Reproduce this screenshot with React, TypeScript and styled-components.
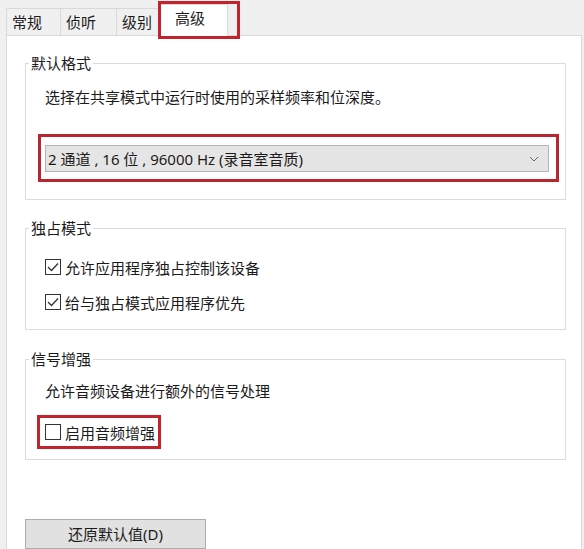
import React from "react";
import styled, { createGlobalStyle } from "styled-components";

const Global = createGlobalStyle`
  html, body { margin: 0; padding: 0; background: #f0f0f0; }
  body {
    font-family: "Noto Sans", "Noto Sans CJK SC", "Liberation Sans", sans-serif;
    color: #1b1b1b;
    font-size: 15px;
  }
`;

const Window = styled.div`
  width: 584px;
  height: 549px;
  overflow: hidden;
  background: #f0f0f0;
  display: flex;
  flex-direction: column;
`;

const TabStrip = styled.div`
  display: flex;
  align-items: flex-end;
  height: 36px;
  padding-left: 6px;
  box-sizing: border-box;
  position: relative;
  z-index: 1;
`;

const Tab = styled.div<{ $w: number; $pl: number; $active?: boolean }>`
  box-sizing: border-box;
  width: ${(p) => p.$w}px;
  height: ${(p) => (p.$active ? 32 : 28)}px;
  padding-left: ${(p) => p.$pl}px;
  display: flex;
  align-items: center;
  font-size: 15px;
  line-height: 20px;
  background: ${(p) => (p.$active ? "#ffffff" : "#f0f0f0")};
  border: 1px solid #d9d9d9;
  border-bottom: ${(p) => (p.$active ? "1px solid #ffffff" : "1px solid #d9d9d9")};
  margin-left: ${(p) => (p.$active ? -2 : -1)}px;
  margin-right: ${(p) => (p.$active ? -2 : 0)}px;
  position: relative;
  z-index: ${(p) => (p.$active ? 2 : 1)};
  padding-bottom: ${(p) => (p.$active ? 4 : 0)}px;
  &:first-child { margin-left: 0; }
`;

const Highlight = styled.div`
  position: absolute;
  border: 3px solid #c3232c;
  pointer-events: none;
`;

const TabHighlight = styled(Highlight)`
  left: -3px;
  top: -4px;
  width: 76px;
  height: 32px;
`;

const Panel = styled.div`
  flex: 1;
  margin: -1px 2px 0 6px;
  background: #ffffff;
  border: 1px solid #d9d9d9;
  border-bottom: none;
  padding: 17px 15px 0 18px;
  display: flex;
  flex-direction: column;
`;

const Group = styled.fieldset<{ $mt?: number }>`
  margin: ${(p) => p.$mt ?? 0}px 0 0 0;
  padding: 0 16px 0 19px;
  border: 1px solid #dcdcdc;
  min-width: 0;
  display: flex;
  flex-direction: column;
`;

const Legend = styled.legend`
  padding: 0 2px;
  margin-left: -16px;
  font-size: 15px;
  line-height: 20px;
`;

const Desc = styled.div<{ $mt: number }>`
  margin-top: ${(p) => p.$mt}px;
  line-height: 22px;
  font-size: 15px;
`;

const ComboFrame = styled.div`
  margin: 26px -10px 17px -7px;
  border: 3px solid #b8262f;
  padding: 8px 7px 7px 4px;
`;

const Combo = styled.div`
  height: 27px;
  box-sizing: border-box;
  background: #e5e5e5;
  border: 1px solid #b4b4b4;
  display: flex;
  align-items: center;
  justify-content: space-between;
  padding: 0 9px 0 2px;
  font-size: 15px;
  line-height: 20px;
`;

const CheckRow = styled.label<{ $mt: number }>`
  margin-top: ${(p) => p.$mt}px;
  height: 22px;
  display: flex;
  align-items: center;
  gap: 4px;
  font-size: 15px;
`;

const Box = styled.span`
  width: 16px;
  height: 16px;
  box-sizing: border-box;
  border: 1px solid #333333;
  background: #fff;
  display: inline-flex;
  align-items: center;
  justify-content: center;
  flex-shrink: 0;
`;

const CheckFrame = styled.div`
  align-self: flex-start;
  margin: 13px 0 10px -8px;
  border: 3px solid #c3232c;
  width: 124px;
  height: 34px;
  box-sizing: border-box;
  padding-left: 5px;
  display: flex;
  align-items: center;
`;

const Spacer = styled.div<{ $h: number }>`
  height: ${(p) => p.$h}px;
`;

const Button = styled.button`
  margin-top: 59px;
  margin-left: 0;
  align-self: flex-start;
  width: 181px;
  height: 30px;
  background: #e1e1e1;
  border: 1px solid #adadad;
  font-family: inherit;
  font-size: 15px;
  line-height: 20px;
  color: #1b1b1b;
  padding: 0;
`;

const Check = () => (
  <svg width="12" height="10" viewBox="0 0 12 10">
    <path d="M1 5 L4.5 8.5 L11 1.5" fill="none" stroke="#333" strokeWidth="1.3" />
  </svg>
);

const Chevron = () => (
  <svg width="10" height="6" viewBox="0 0 10 6">
    <path d="M1 1 L5 5 L9 1" fill="none" stroke="#666" strokeWidth="1" />
  </svg>
);

export default function App() {
  return (
    <>
      <Global />
      <Window>
        <TabStrip>
          <Tab $w={55} $pl={5}>常规</Tab>
          <Tab $w={57} $pl={5}>侦听</Tab>
          <Tab $w={46} $pl={5}>级别</Tab>
          <Tab $w={68} $pl={14} $active>
            高级
            <TabHighlight />
          </Tab>
        </TabStrip>
        <Panel>
          <Group>
            <Legend>默认格式</Legend>
            <Desc $mt={13}>选择在共享模式中运行时使用的采样频率和位深度。</Desc>
            <ComboFrame>
              <Combo>
                <span>2 通道 , 16 位 , 96000 Hz (录音室音质)</span>
                <Chevron />
              </Combo>
            </ComboFrame>
          </Group>
          <Group $mt={18}>
            <Legend>独占模式</Legend>
            <CheckRow $mt={18}>
              <Box><Check /></Box>允许应用程序独占控制该设备
            </CheckRow>
            <CheckRow $mt={13}>
              <Box><Check /></Box>给与独占模式应用程序优先
            </CheckRow>
            <Spacer $h={16} />
          </Group>
          <Group $mt={19}>
            <Legend>信号增强</Legend>
            <Desc $mt={11}>允许音频设备进行额外的信号处理</Desc>
            <CheckFrame>
              <CheckRow $mt={0}>
                <Box />启用音频增强
              </CheckRow>
            </CheckFrame>
          </Group>
          <Button>还原默认值(D)</Button>
        </Panel>
      </Window>
    </>
  );
}
